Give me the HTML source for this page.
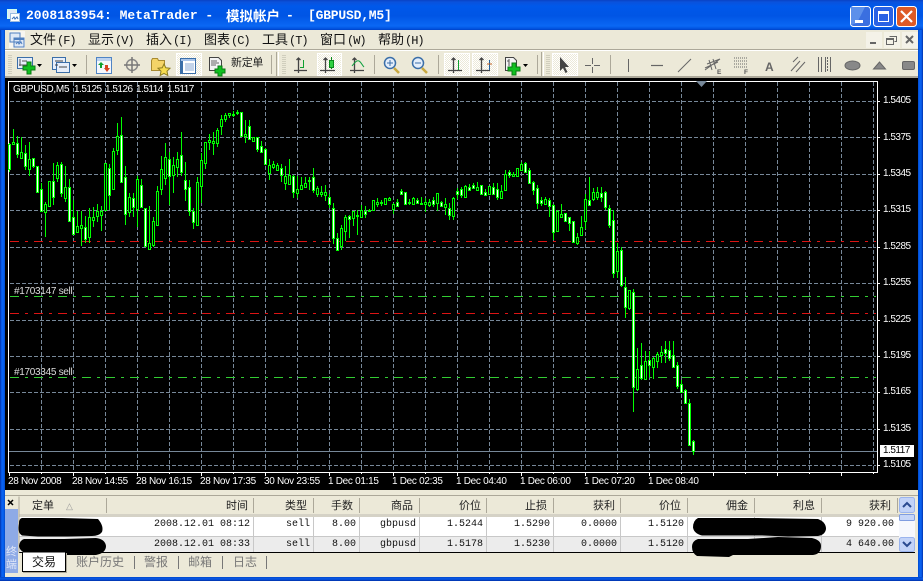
<!DOCTYPE html>
<html><head><meta charset="utf-8"><style>
html,body{margin:0;padding:0;width:923px;height:581px;overflow:hidden;background:#ece9d8}
.a{position:absolute;white-space:pre}
#tb{left:0;top:0;width:923px;height:30px;background:linear-gradient(#0a42c4 0,#0a52dc 2px,#0058ea 6px,#0055e5 16px,#0a68f4 26px,#0050dc 29px,#0040c4 30px)}
#t{left:26px;top:8px;font:bold 13px/15px "Liberation Mono",monospace;color:#fff}
.m{top:31px;font:13px/16px "WenQuanYi Zen Hei","Noto Sans CJK SC",sans-serif;color:#111}
.m b{font:12px/16px "Liberation Mono",monospace;letter-spacing:-1px;font-weight:normal;margin-left:1px}
.ck{font:10px/12px "Liberation Sans",sans-serif;color:#fff;letter-spacing:-.3px}
.p{letter-spacing:-.5px}
.h{font:11px/13px "WenQuanYi Zen Hei","Noto Sans CJK SC",sans-serif;color:#222;top:499px}
.d{font:10px/12px "Liberation Mono",monospace;color:#111}
.r1{top:519px}.r2{top:539px}
.tab{top:554px;font:12px/15px "WenQuanYi Zen Hei","Noto Sans CJK SC",sans-serif;color:#777}
</style></head><body>
<div class="a" style="left:0;top:30px;width:923px;height:551px;background:#ece9d8"></div>
<div class="a" id="tb"></div>
<div class="a" style="left:0;top:30px;width:5px;height:551px;background:linear-gradient(90deg,#0030a8,#0a5ae8 30%,#0866f5 60%,#0048cc)"></div>
<div class="a" style="left:918px;top:30px;width:5px;height:551px;background:linear-gradient(90deg,#0048cc,#0866f5 40%,#0a5ae8 70%,#0030a8)"></div>
<div class="a" style="left:0;top:577px;width:923px;height:4px;background:linear-gradient(#0048cc,#0a5ae8 50%,#0030a8)"></div>
<div class="a" id="t">2008183954: MetaTrader -</div>
<div class="a" style="left:226px;top:7px;font:bold 13.5px/16px 'WenQuanYi Zen Hei','Noto Sans CJK SC',sans-serif;color:#fff">模拟帐户</div>
<div class="a" style="left:286px;top:8px;font:bold 13px/15px 'Liberation Mono',monospace;color:#fff">-</div>
<div class="a" style="left:308px;top:8px;font:bold 13px/15px 'Liberation Mono',monospace;color:#fff;letter-spacing:-.2px">[GBPUSD,M5]</div>

<div class="a m" style="left:30px">文件<b>(F)</b></div>
<div class="a m" style="left:88px">显示<b>(V)</b></div>
<div class="a m" style="left:146px">插入<b>(I)</b></div>
<div class="a m" style="left:204px">图表<b>(C)</b></div>
<div class="a m" style="left:262px">工具<b>(T)</b></div>
<div class="a m" style="left:320px">窗口<b>(W)</b></div>
<div class="a m" style="left:378px">帮助<b>(H)</b></div>

<div class="a" style="left:5px;top:50px;width:913px;height:1px;background:#fff"></div>
<div class="a" style="left:5px;top:49px;width:913px;height:1px;background:#aca899"></div>
<div class="a" style="left:5px;top:76px;width:913px;height:2px;background:#aca899"></div>
<div class="a" style="left:5px;top:78px;width:913px;height:412px;background:#000"></div>
<div class="a" style="left:5px;top:495px;width:913px;height:1px;background:#aca899"></div>

<svg class="a" style="left:0;top:0" width="923" height="581" viewBox="0 0 923 581">
<defs><pattern id="dz" width="2" height="2" patternUnits="userSpaceOnUse"><rect width="2" height="2" fill="#fff"/><rect width="1" height="1" fill="#ece9d8"/><rect x="1" y="1" width="1" height="1" fill="#ece9d8"/></pattern></defs>
<g fill="url(#dz)" stroke="#fff">
<rect x="176.500" y="53.500" width="25" height="22"/><rect x="317.500" y="53.500" width="24" height="22"/><rect x="444.500" y="53.500" width="25" height="22"/><rect x="472.500" y="53.500" width="25" height="22"/><rect x="552.500" y="53.500" width="25" height="22"/>
</g>
<g fill="none" stroke="#aca899"><path d="M86.500 55v19M271.500 55v19M374.500 55v19M438.500 55v19M537.500 55v19M610.500 55v19"/>
<path d="M276.500 52v24M541.500 52v24"/></g>
<path d="M278.500 52v24M543.500 52v24" stroke="#fff"/>
<g stroke="#b5b2a2" stroke-dasharray="1 1"><path d="M9 55v20M11 55v20M283 55v20M285 55v20M547 55v20M549 55v20"/></g>
<!-- menu icon -->
<rect x="9" y="31" width="16" height="17" fill="#f7f6f0"/>
<path d="M10 33h10v9h-10zM14 38h10v9h-10z" fill="#dfe9f6" stroke="#4f7fbf"/><path d="M14 38h10v2h-10z" fill="#4f7fbf"/><path d="M16 44l2-2 1 2 2-2 1 2" fill="none" stroke="#4f7fbf"/>
<!-- title icon -->
<path d="M7.500 9.500h9v9h-9z" fill="#dfe9f6" stroke="#cfe"/><path d="M10.500 13.500h9v8h-9z" fill="#fff" stroke="#9bbbe0"/><path d="M12 19l2-2 1 2 2-2 1 2" fill="none" stroke="#3a70b8"/>
<!-- new chart -->
<path d="M17.500 57.500h15v11h-15z" fill="#e6eefa" stroke="#3a6ea8"/><path d="M20 59v7M19 65h8M22 61h5" stroke="#555" fill="none"/>
<path d="M27 62h4v4h4v4h-4v4h-4v-4h-4v-4h4z" fill="#10c020" stroke="#0a7a14"/>
<path d="M37 64h5l-2.500 3z" fill="#000"/>
<!-- profiles -->
<path d="M52.500 57.500h13v12h-13z" fill="#e6eefa" stroke="#3a6ea8"/><path d="M56.500 62.500h13v10h-13z" fill="#e6eefa" stroke="#3a6ea8"/><path d="M55 61h8M59 67h8M55 65h3" stroke="#444" fill="none"/>
<path d="M72 64h5l-2.500 3z" fill="#000"/>
<!-- market watch -->
<path d="M96.500 57.500h15v16h-15z" fill="#f4f7fd" stroke="#4f84c4"/><path d="M97 58h14v3h-14z" fill="#bcd2ef"/><path d="M101 62l3 3h-2v3h-2v-3h-2z" fill="#10a030"/><path d="M105 65h3v3h2l-3 4-3-4h1z" fill="#d84020"/>
<!-- navigator crosshair -->
<circle cx="132" cy="65" r="5.500" fill="none" stroke="#888" stroke-width="1.500"/><path d="M132 57v16M124 65h16" stroke="#777" stroke-width="1.500"/>
<!-- folder star -->
<path d="M151.500 60.500l1-2h5l1 2h6v10h-13z" fill="#f4d468" stroke="#a88a30"/><path d="M164 64l1.800 3.800 4.200.5-3 2.900.8 4.200-3.800-2-3.800 2 .8-4.200-3-2.900 4.200-.5z" fill="#f6dc50" stroke="#8a7a20"/>
<!-- terminal -->
<path d="M180.500 58.500h15v15h-15z" fill="#fff" stroke="#3a6ea8"/><path d="M181 59h14v2h-14z" fill="#a8c4ea"/><path d="M181 61h2v12h-2z" fill="#3a6ea8"/><path d="M185 64h9M185 66h9M185 68h9M185 70h9" stroke="#8aa8d4"/>
<!-- new order -->
<path d="M209.500 57.500h9l3 3v10h-12z" fill="#f3f3f3" stroke="#444"/><path d="M211 61h6M211 63h8M211 65h5" stroke="#666"/>
<path d="M218 66h4v3h3v4h-3v3h-4v-3h-3v-4h3z" fill="#10c020" stroke="#0a7a14"/>
<!-- charts -->
<g fill="none" stroke="#444" stroke-width="1.300">
<path d="M298.500 58v15M294 70.500h13M296.500 60l2-2 2 2"/><path d="M325.500 58v15M320 70.500h15M323.500 60l2-2 2 2"/><path d="M354.500 58v15M350 70.500h14M352.500 60l2-2 2 2"/>
<path d="M453.500 58v15M448 70.500h14M451.500 60l2-2 2 2"/><path d="M481.500 58v15M476 70.500h14M479.500 60l2-2 2 2"/>
</g>
<path d="M303.500 60v8M304 67.500h-4" stroke="#10a030" fill="none"/>
<path d="M331.500 57v12" stroke="#0a8a1a"/><path d="M329.500 60.500h4v7h-4z" fill="#30d040" stroke="#0a8a1a"/>
<path d="M352 66c3-4 5-6 7-5s3 4 5 6" fill="none" stroke="#10a040"/>
<path d="M458.500 60v10" stroke="#10a030"/><path d="M489.500 60v10" stroke="#2060a0"/><path d="M487 64h5" stroke="#c06020"/>
<!-- zoom -->
<g fill="#e4eefb" stroke="#3a6ea8" stroke-width="1.500"><circle cx="390" cy="63" r="5.500"/><circle cx="418" cy="63" r="5.500"/></g>
<path d="M394 68l5 5M422 68l5 5" stroke="#c8a840" stroke-width="2.500"/><path d="M387 63h6M390 60v6M415 63h6" stroke="#3a6ea8"/>
<!-- new indicator doc -->
<path d="M505.500 57.500h8l3 3v10h-11z" fill="#f3f3f3" stroke="#444"/><path d="M507 61h2M509 59v7" stroke="#555"/>
<path d="M512 63h4v4h4v4h-4v4h-4v-4h-4v-4h4z" fill="#10c020" stroke="#0a7a14"/><path d="M523 64h5l-2.500 3z" fill="#000"/>
<!-- cursor -->
<path d="M560 57v14l3-3 2.500 5 2-1-2.500-5h4z" fill="#444"/>
<path d="M592.500 58v6M592.500 67v6M585 65.500h6M594 65.500h6" stroke="#666" fill="none"/>
<!-- draw tools -->
<g fill="none" stroke="#666">
<path d="M628.500 59v13"/><path d="M651 65.500h12" stroke-width="1.200"/><path d="M678 72l13-13"/>
<path d="M705 70l15-11M707 64l13-5M705 68l13-6M709 60l3 10M713 59l3 10"/>
<path d="M734 58h14M734 61h14M734 64h14M734 67h14" stroke-dasharray="1 1"/>
<path d="M791 71l9-10M796 72l9-10M793 62l5-5"/>
<path d="M818.500 57v15M821.500 57v15M825.500 57v15M830.500 57v15" /><path d="M827.500 57v15" stroke-dasharray="2 1"/>
</g>
<ellipse cx="852.500" cy="65.500" rx="7.500" ry="4.500" fill="#888" stroke="#666"/>
<path d="M873.500 69h12l-6-7z" fill="#888" stroke="#666"/>
<rect x="902.500" y="61.500" width="12" height="8" rx="1.500" fill="#888" stroke="#666"/>
<text x="717" y="74" font-family="Liberation Sans,sans-serif" font-size="6.500" font-weight="bold" fill="#555">E</text>
<text x="744" y="74" font-family="Liberation Sans,sans-serif" font-size="6.500" font-weight="bold" fill="#555">F</text>
<text x="765" y="71" font-family="Liberation Sans,sans-serif" font-size="12" font-weight="bold" fill="#666">A</text>
<!-- window buttons -->
<rect x="850.500" y="6.500" width="20" height="20" rx="3" fill="#3a6fe0" stroke="#fff"/><path d="M851 7h14l-8 16-6 2z" fill="#5d90ea"/><rect x="855" y="20" width="8" height="3" fill="#fff"/>
<rect x="873.500" y="6.500" width="20" height="20" rx="3" fill="#2a62e4" stroke="#fff"/><path d="M878.500 12.500h10v9h-10z" fill="none" stroke="#fff"/><rect x="878" y="11" width="11" height="3" fill="#fff"/>
<rect x="896.500" y="6.500" width="20" height="20" rx="3" fill="#de5a26" stroke="#fff"/><path d="M901 11l11 11M912 11l-11 11" stroke="#fff" stroke-width="2.200"/>
<!-- MDI -->
<g fill="#f4f2e8"><rect x="866" y="32" width="16" height="16"/><rect x="884" y="32" width="16" height="16"/><rect x="902" y="32" width="16" height="16"/></g>
<path d="M870 42h6v2h-6z" fill="#666"/><path d="M889.500 36.500h7v5h-2M886.500 38.500h7v6h-7zM886 39.500h7" fill="none" stroke="#666"/><path d="M906 36l7 7M913 36l-7 7" stroke="#666" stroke-width="2"/>
<!-- chart -->
<g id="c" shape-rendering="crispEdges"></g>
<path d="M696 81h11l-5.500 6z" fill="#778899"/>
<!-- table frame -->
<rect x="19" y="496" width="884" height="18" fill="#ece9d8"/>
<rect x="19" y="514" width="884" height="3" fill="#d5d2c6"/>
<rect x="19" y="517" width="880" height="19" fill="#fff"/>
<rect x="19" y="536" width="880" height="1" fill="#c8c8c8"/>
<rect x="19" y="537" width="880" height="15" fill="#ececec"/>
<path d="M106.500 498v15M253.500 498v15M313.500 498v15M359.500 498v15M419.500 498v15M486.500 498v15M553.500 498v15M620.500 498v15M687.500 498v15M754.500 498v15M821.500 498v15M897.500 498v15" stroke="#aca899"/>
<path d="M253.500 517v35M313.500 517v35M359.500 517v35M419.500 517v35M486.500 517v35M553.500 517v35M620.500 517v35M687.500 517v35M754.500 517v35M821.500 517v35" stroke="#c8c8c8"/>
<path d="M19 552.500h896" stroke="#000"/>
<path d="M19 496.500v56" stroke="#aca899"/>
<!-- scrollbar -->
<rect x="899" y="514" width="16" height="24" fill="#f6f8fd"/>
<rect x="899.500" y="497.500" width="15" height="15" rx="2" fill="#c2d3f8" stroke="#9ab4ee"/><path d="M903 507l4-4 4 4" fill="none" stroke="#2a4a90" stroke-width="2"/>
<rect x="899.500" y="514.500" width="15" height="6" rx="1" fill="#c6d6f8" stroke="#7f9de0"/>
<rect x="899.500" y="537.500" width="15" height="14" rx="2" fill="#c2d3f8" stroke="#9ab4ee"/><path d="M903 542l4 4 4-4" fill="none" stroke="#2a4a90" stroke-width="2"/>
<!-- redactions -->
<g fill="#000">
<path d="M22 518h30l10 0 36 1q6 7 4 13q-3 4-10 4l-24 .5h-30l-16-1q-5-3-3-12q0-5 3-5.500z"/>
<path d="M24 539h40l32-1q9 1 10 8q0 7-10 9l-30 0-12 1-26-2q-8-2-9-8q1-6 5-7z"/>
<path d="M698 518h60l60 1q8 3 8 10q-1 6-8 7l-30 .5-26-1-60 0q-8-2-9-8q0-7 5-9.500z"/>
<path d="M698 539h50l30-2 34 1q9 2 9 8q0 8-8 9l-50 0-30 0-4 2-32-1q-5-3-5-9q0-6 6-8z"/>
</g>
<!-- left tab -->
<rect x="5" y="509" width="13" height="64" fill="#8eaae6"/>
<path d="M8 500l5 5M13 500l-5 5" stroke="#000" stroke-width="1.500"/>
<!-- active tab -->
<path d="M22.500 552.500v19h43v-19" fill="#fff" stroke="#000"/><path d="M23 572.500h44M66.500 553v20" stroke="#aca899"/>
<path d="M134.500 556v13M178.500 556v13M222.500 556v13M266.500 556v13" stroke="#777"/>
</svg>

<div class="a" style="left:5px;top:545px;width:13px;font:11px/13px 'WenQuanYi Zen Hei','Noto Sans CJK SC',sans-serif;color:#dfe6f8;white-space:normal;text-align:center">终端</div>
<div class="a" style="left:231px;top:55px;font:11px/14px 'WenQuanYi Zen Hei','Noto Sans CJK SC',sans-serif;letter-spacing:-.3px;color:#222">新定单</div>

<div class="a ck" style="left:13px;top:84px">GBPUSD,M5</div>
<div class="a ck p" style="left:74px;top:84px">1.5125</div>
<div class="a ck p" style="left:105px;top:84px">1.5126</div>
<div class="a ck p" style="left:136px;top:84px">1.5114</div>
<div class="a ck p" style="left:167px;top:84px">1.5117</div>
<div class="a ck" style="left:14px;top:286px;color:#ddd">#1703147 sell</div>
<div class="a ck" style="left:14px;top:367px;color:#ddd">#1703345 sell</div>

<div class="a ck p" style="left:883px;top:95px">1.5405</div>
<div class="a ck p" style="left:883px;top:132px">1.5375</div>
<div class="a ck p" style="left:883px;top:168px">1.5345</div>
<div class="a ck p" style="left:883px;top:204px">1.5315</div>
<div class="a ck p" style="left:883px;top:241px">1.5285</div>
<div class="a ck p" style="left:883px;top:277px">1.5255</div>
<div class="a ck p" style="left:883px;top:314px">1.5225</div>
<div class="a ck p" style="left:883px;top:350px">1.5195</div>
<div class="a ck p" style="left:883px;top:386px">1.5165</div>
<div class="a ck p" style="left:883px;top:423px">1.5135</div>
<div class="a ck p" style="left:883px;top:459px">1.5105</div>
<div class="a ck p" style="left:880px;top:445px;width:31px;height:12px;padding-left:3px;background:#fff;color:#000">1.5117</div>

<div class="a ck" style="left:8px;top:476px">28 Nov 2008</div>
<div class="a ck" style="left:72px;top:476px">28 Nov 14:55</div>
<div class="a ck" style="left:136px;top:476px">28 Nov 16:15</div>
<div class="a ck" style="left:200px;top:476px">28 Nov 17:35</div>
<div class="a ck" style="left:264px;top:476px">30 Nov 23:55</div>
<div class="a ck" style="left:328px;top:476px">1 Dec 01:15</div>
<div class="a ck" style="left:392px;top:476px">1 Dec 02:35</div>
<div class="a ck" style="left:456px;top:476px">1 Dec 04:40</div>
<div class="a ck" style="left:520px;top:476px">1 Dec 06:00</div>
<div class="a ck" style="left:584px;top:476px">1 Dec 07:20</div>
<div class="a ck" style="left:648px;top:476px">1 Dec 08:40</div>

<div class="a h" style="left:32px">定单</div>
<div class="a" style="left:66px;top:500px;font:9px/12px 'Liberation Sans',sans-serif;color:#999">△</div>
<div class="a h" style="right:675px">时间</div>
<div class="a h" style="right:616px">类型</div>
<div class="a h" style="right:570px">手数</div>
<div class="a h" style="right:510px">商品</div>
<div class="a h" style="right:442px">价位</div>
<div class="a h" style="right:376px">止损</div>
<div class="a h" style="right:308px">获利</div>
<div class="a h" style="right:242px">价位</div>
<div class="a h" style="right:175px">佣金</div>
<div class="a h" style="right:108px">利息</div>
<div class="a h" style="right:32px">获利</div>

<div class="a d r1" style="right:673px">2008.12.01 08:12</div>
<div class="a d r1" style="right:613px">sell</div>
<div class="a d r1" style="right:567px">8.00</div>
<div class="a d r1" style="right:507px">gbpusd</div>
<div class="a d r1" style="right:440px">1.5244</div>
<div class="a d r1" style="right:373px">1.5290</div>
<div class="a d r1" style="right:306px">0.0000</div>
<div class="a d r1" style="right:239px">1.5120</div>
<div class="a d r1" style="right:29px">9 920.00</div>
<div class="a d r2" style="right:673px">2008.12.01 08:33</div>
<div class="a d r2" style="right:613px">sell</div>
<div class="a d r2" style="right:567px">8.00</div>
<div class="a d r2" style="right:507px">gbpusd</div>
<div class="a d r2" style="right:440px">1.5178</div>
<div class="a d r2" style="right:373px">1.5230</div>
<div class="a d r2" style="right:306px">0.0000</div>
<div class="a d r2" style="right:239px">1.5120</div>
<div class="a d r2" style="right:29px">4 640.00</div>

<div class="a tab" style="left:32px;color:#111">交易</div>
<div class="a tab" style="left:76px">账户历史</div>
<div class="a tab" style="left:144px">警报</div>
<div class="a tab" style="left:188px">邮箱</div>
<div class="a tab" style="left:233px">日志</div>

<script>
var a=[[158,245,163,238,1],[117,162,156,161,0],[138,205,160,192,1],[140,205,186,204,0],[165,240,190,228,1],[155,258,208,236,0],[205,235,205,228,1],[228,305,228,305,1],[280,365,298,362,1],[335,440,343,365,0],[272,350,274,347,0],[220,345,272,322,1],[215,275,225,263,0],[215,320,222,308,1],[228,335,292,323,0],[267,392,290,392,1],[330,432,382,432,1],[362,430,408,426,0],[362,467,405,413,0],[378,460,412,446,1],[353,458,382,442,0],[352,410,382,389,0],[343,395,362,378,0],[348,423,362,374,0],[220,360,220,360,0],[222,360,235,315,1],[175,296,184,296,0],[98,195,138,180,0],[82,275,136,275,1],[228,405,262,372,1],[310,380,320,366,0],[310,380,324,351,1],[258,412,268,357,0],[267,352,286,351,1],[355,467,355,467,1],[348,480,460,477,0],[381,470,394,464,0],[287,405,304,404,0],[198,315,238,297,0],[160,285,202,263,0],[186,345,208,257,1],[202,310,226,255,0],[187,262,208,230,0],[127,258,196,245,1],[217,333,270,297,1],[270,378,292,362,1],[355,417,364,395,1],[262,405,277,404,0],[190,340,211,287,0],[155,237,156,218,0],[132,180,150,155,0],[126,195,153,158,0],[115,172,121,158,0],[75,134,87,108,0],[70,96,76,87,0],[68,85,70,74,0],[62,82,72,76,0],[60,75,67,70,1],[65,137,67,137,1],[90,158,132,137,0],[90,147,108,147,1],[140,155,142,152,0],[140,185,142,177,1],[153,186,168,185,1],[175,222,178,222,1],[207,270,226,248,0],[212,237,222,230,0],[218,240,225,240,0],[222,275,234,256,1],[228,300,258,278,0],[207,282,256,282,0],[255,323,258,305,1],[258,325,298,310,0],[260,298,286,296,0],[262,295,279,291,0],[262,300,270,272,0],[234,310,262,300,1],[288,322,294,311,0],
[288,320,307,311,0],[285,333,306,315,0],[312,355,322,341,1],[340,462,355,443,1],[428,480,445,479,1],[405,480,415,467,0],[375,452,381,422,0],[375,444,379,388,1],[362,408,363,383,0],[360,435,374,376,0],[345,385,361,380,0],[348,385,362,371,1],[358,366,360,364,0],[330,362,331,360,0],[323,350,336,341,0],[330,348,337,340,0],[323,345,325,341,0],[320,333,325,329,0],[340,372,343,357,0],[328,350,336,348,1],[297,312,304,311,1],[306,345,307,342,1],[328,345,337,339,0],[322,345,325,341,0],[325,342,331,338,1],[320,342,340,342,0],[325,365,336,341,0],[328,350,336,344,0],[322,350,331,341,1],[309,362,310,338,0],[332,352,337,347,1],[323,375,343,350,0],[338,390,355,375,1],[320,390,325,377,0],[295,328,304,311,1],[290,325,298,315,1],[285,322,287,320,0],[283,302,290,299,1],[280,298,286,293,1],[277,300,292,299,0],[285,315,286,312,1],[297,315,307,315,1],[288,312,289,312,0],[280,315,292,311,1],[279,330,298,320,1],[285,325,304,323,0],[240,300,252,299,0],[240,264,247,255,1],[247,258,253,257,0],[234,258,235,257,0],[215,240,222,239,0],[216,248,220,245,1],[235,282,241,278,1],[273,315,275,299,1],[285,358,295,338,1],[322,348,331,338,1],[322,345,328,341,0],[325,380,331,347,1],[342,450,344,425,1],[360,427,362,423,0],[342,382,372,380,0],[368,395,370,393,1],[380,423,382,398,1],[393,458,394,456,1],[430,465,440,458,0],[378,435,412,434,0],[312,418,328,392,0],[262,345,331,344,1],[294,332,306,327,0],[292,330,307,320,0],[292,335,310,320,1],[304,360,306,350,1],[345,414,355,404,1]];
var b=[[120,323,151,308,1],[220,325,244,302,0],[232,352,241,344,1],[321,443,352,410,1],[360,420,361,413,0],[357,725,367,650,1],[533,662,598,656,0],[518,630,586,623,1],[543,630,574,628,0],[543,620,571,586,1],[560,627,564,590,0],[546,595,553,572,0],[528,578,546,556,0],[513,578,538,548,1],[513,572,541,563,1],[513,590,556,590,1],[577,658,586,647,1],[630,667,642,665,1],[658,700,661,698,1],[688,827,700,825,1],[810,855,814,844,1]];
var s='',i,x,y;
function R(x,y,w,h,f){s+='<rect x="'+x+'" y="'+y+'" width="'+w+'" height="'+h+'" fill="'+f+'"/>'}
function L(d,c,das){s+='<path d="'+d+'" fill="none" stroke="'+c+'"'+(das?' stroke-dasharray="'+das+'"':'')+'/>'}
var ys=[101,137,174,210,247,283,320,356,392,429,465],d='';
for(i=0;i<ys.length;i++){d+='M10 '+(ys[i]+.5)+'H876';R(877,ys[i],3,1,'#fff')}
L(d,'#778899','4 2');
d='';for(x=41;x<876;x+=32){d+='M'+(x+.5)+' 82V471'}
L(d,'#778899','4 2');
for(x=9;x<876;x+=64){R(x,472,1,4,'#fff')}
for(x=41;x<876;x+=32){R(x,472,1,2,'#fff')}
L('M10 241.5H876','#dc1414','9 6 3 6');
L('M10 296.5H876','#32cd32','9 6 3 6');
L('M10 313.5H876','#dc1414','9 6 3 6');
L('M10 377.5H876','#32cd32','9 6 3 6');
L('M9 451.5H877','#778899');
R(8,81,870,1,'#fff');R(8,472,870,1,'#fff');R(8,81,1,392,'#fff');R(877,81,1,392,'#fff');
function C(c,o,k){var X=9+4*k,h=o+Math.round(c[0]/3),l=o+Math.round(c[1]/3),t=o+Math.round(c[2]/3),e=o+Math.round(c[3]/3);if(e<=t)e=t+1;
R(X,h,1,Math.max(l-h,1),'#00ff00');R(X-1,t,3,e-t+1,'#00ff00');if(e-t>1)R(X,t+1,1,e-t-1,c[4]?'#fff':'#000')}
for(i=0;i<a.length;i++)C(a[i],90,i);
for(i=0;i<b.length;i++)C(b[i],170,a.length+i);
document.getElementById('c').innerHTML=s;
</script>
</body></html>
